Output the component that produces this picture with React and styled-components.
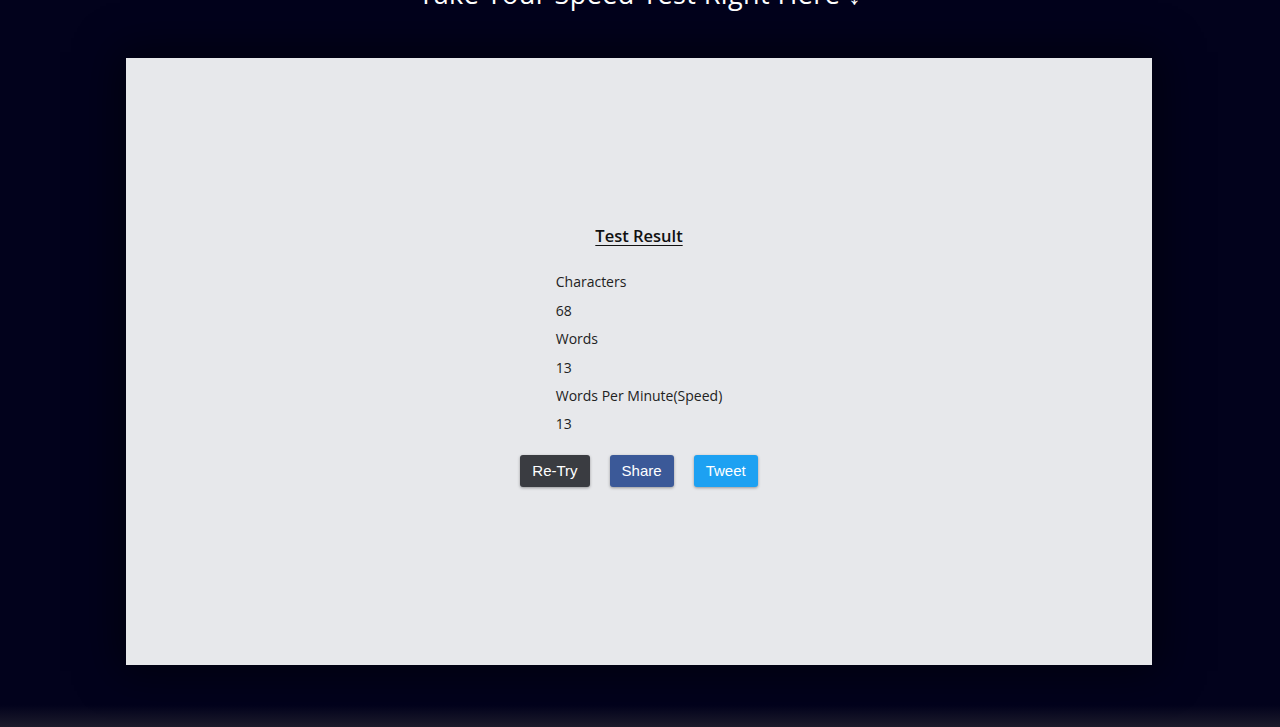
import React from 'react';
import styled, { createGlobalStyle } from 'styled-components';

const GlobalStyle = createGlobalStyle`
	html, body {
		margin: 0;
		padding: 0;
		background-color: #02021c;
		font-family: "Open Sans", "Liberation Sans", sans-serif;
		overflow: hidden;
	}
`;

const Page = styled.div`
	display: flex;
	flex-direction: column;
	align-items: center;
	height: 727px;
	background-color: #02021c;
`;

const Heading = styled.h2`
	margin: -21px 0 0;
	height: 79px;
	color: #ffffff;
	font-size: 27px;
	font-weight: 500;
	line-height: 30px;
	letter-spacing: 0.4px;
`;

const Card = styled.div`
	display: flex;
	flex-direction: column;
	align-items: center;
	justify-content: center;
	width: 1026px;
	height: 607px;
	margin-right: 2px;
	background-color: #e7e8eb;
	box-shadow: 0 0 40px 6px rgba(0, 0, 0, 0.55);
	padding-bottom: 12px;
	box-sizing: border-box;
`;

const Title = styled.h3`
	margin: 0 0 21px;
	font-size: 16.5px;
	font-weight: 600;
	color: #111;
	text-decoration: underline;
	text-underline-offset: 3px;
`;

const StatList = styled.div`
	display: flex;
	flex-direction: column;
	margin-bottom: 16px;
`;

const StatLine = styled.p`
	margin: 0;
	font-size: 14px;
	line-height: 28.4px;
	color: #222;
`;

const ButtonRow = styled.div`
	display: flex;
	gap: 20px;
`;

const Button = styled.button`
	height: 32px;
	padding: 0 ${props => props.$pad || 12}px;
	border: none;
	border-radius: 3px;
	background-color: ${props => props.$bg};
	color: #fff;
	font-family: "Liberation Sans", Arial, sans-serif;
	font-size: 15px;
	box-shadow: 0 1px 3px rgba(0, 0, 0, 0.35);
	cursor: pointer;
`;

const Footer = styled.div`
	margin-top: auto;
	width: 100%;
	height: 22px;
	background: linear-gradient(to bottom, rgba(2, 2, 28, 0) 0%, #1c1b2b 100%);
`;

const stats = [
	{ label: 'Characters', value: 68 },
	{ label: 'Words', value: 13 },
	{ label: 'Words Per Minute(Speed)', value: 13 }
];

export default function App() {
	return (
		<Page>
			<GlobalStyle />
			<Heading>Take Your Speed Test Right Here ↓</Heading>
			<Card>
				<Title>Test Result</Title>
				<StatList>
					{stats.map(s => (
						<React.Fragment key={s.label}>
							<StatLine>{s.label}</StatLine>
							<StatLine>{s.value}</StatLine>
						</React.Fragment>
					))}
				</StatList>
				<ButtonRow>
					<Button $bg="#3a3c41">Re-Try</Button>
					<Button $bg="#3b5998">Share</Button>
					<Button $bg="#1da1f2">Tweet</Button>
				</ButtonRow>
			</Card>
			<Footer />
		</Page>
	);
}
